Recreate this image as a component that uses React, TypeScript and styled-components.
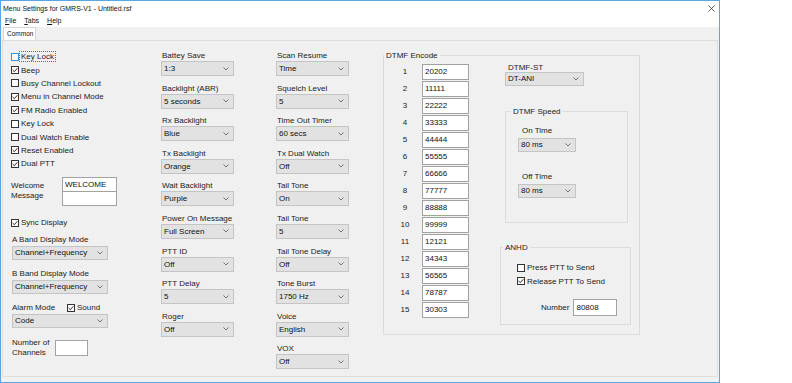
import styled, { createGlobalStyle } from "styled-components"

const GlobalStyle = createGlobalStyle`
  html, body { margin: 0; padding: 0; background: #ffffff; }
  body {
    font-family: "Liberation Sans", Arial, sans-serif;
    font-size: 8px;
    color: #1b1b1b;
  }
  * { box-sizing: border-box; }
`

type CheckProps = {
    label: string
    checked?: boolean
    focused?: boolean
}

const leftChecks: CheckProps[] = [
    { label: "Key Lock", focused: true },
    { label: "Beep", checked: true },
    { label: "Busy Channel Lockout" },
    { label: "Menu in Channel Mode", checked: true },
    { label: "FM Radio Enabled", checked: true },
    { label: "Key Lock" },
    { label: "Dual Watch Enable" },
    { label: "Reset Enabled", checked: true },
    { label: "Dual PTT", checked: true },
]

const middleFields = [
    ["Battey Save", "1:3"],
    ["Backlight (ABR)", "5 seconds"],
    ["Rx Backlight", "Blue"],
    ["Tx Backlight", "Orange"],
    ["Wait Backlight", "Purple"],
    ["Power On Message", "Full Screen"],
    ["PTT ID", "Off"],
    ["PTT Delay", "5"],
    ["Roger", "Off"],
]

const rightFields = [
    ["Scan Resume", "Time"],
    ["Squelch Level", "5"],
    ["Time Out Timer", "60 secs"],
    ["Tx Dual Watch", "Off"],
    ["Tail Tone", "On"],
    ["Tail Tone", "5"],
    ["Tail Tone Delay", "Off"],
    ["Tone Burst", "1750 Hz"],
    ["Voice", "English"],
    ["VOX", "Off"],
]

const dtmfCodes = [
    "20202", "11111", "22222", "33333", "44444", "55555", "66666", "77777",
    "88888", "99999", "12121", "34343", "56565", "78787", "30303",
]

const Check = ({ label, checked, focused }: CheckProps) => (
    <CheckRow>
        <Box $focused={focused}>
            {checked && (
                <svg width="6" height="6" viewBox="0 0 6 6">
                    <polyline points="0.6,3 2.3,4.7 5.4,1.2" fill="none" stroke="#2a2a2a" strokeWidth="1" />
                </svg>
            )}
        </Box>
        <CheckText $focused={focused}>{label}</CheckText>
    </CheckRow>
)

const Combo = ({ value, width, $tall }: { value: string; width: number; $tall?: boolean }) => (
    <ComboBox style={{ width }} $tall={$tall}>
        <span>{value}</span>
        <svg width="6" height="4" viewBox="0 0 6 4">
            <polyline points="0.5,0.5 3,3 5.5,0.5" fill="none" stroke="#6a6a6a" strokeWidth="0.9" />
        </svg>
    </ComboBox>
)

const App = () => {
    return (
        <>
            <GlobalStyle />
            <Window>
                <TitleBar>
                    <span>Menu Settings for GMRS-V1 - Untitled.rsf</span>
                    <svg width="7" height="7" viewBox="0 0 7 7">
                        <path d="M0.5 0.5 L6.5 6.5 M6.5 0.5 L0.5 6.5" stroke="#333" strokeWidth="0.8" />
                    </svg>
                </TitleBar>
                <MenuBar>
                    <MenuItem><u>F</u>ile</MenuItem>
                    <MenuItem><u>T</u>abs</MenuItem>
                    <MenuItem><u>H</u>elp</MenuItem>
                </MenuBar>
                <TabStrip>
                    <Tab>Common</Tab>
                </TabStrip>
                <TabPage>
                    <LeftColumn>
                        {leftChecks.map((c, i) => (
                            <Check key={i} {...c} />
                        ))}
                        <WelcomeRow>
                            <WelcomeLabel>Welcome<br />Message</WelcomeLabel>
                            <div>
                                <TextBox style={{ width: 55, height: 15 }} defaultValue="WELCOME" readOnly />
                                <TextBox style={{ width: 55, height: 15, marginTop: -1 }} readOnly />
                            </div>
                        </WelcomeRow>
                        <SyncRow>
                            <Check label="Sync Display" checked />
                        </SyncRow>
                        <SideLabel $top={4.8}>A Band Display Mode</SideLabel>
                        <SideCombo><Combo value="Channel+Frequency" width={96} /></SideCombo>
                        <SideLabel $top={8.5}>B Band Display Mode</SideLabel>
                        <SideCombo><Combo value="Channel+Frequency" width={96} /></SideCombo>
                        <AlarmRow>
                            <AlarmLabel>Alarm Mode</AlarmLabel>
                            <Check label="Sound" checked />
                        </AlarmRow>
                        <SideCombo><Combo value="Code" width={96} /></SideCombo>
                        <ChannelsRow>
                            <ChannelsLabel>Number of<br />Channels</ChannelsLabel>
                            <TextBox style={{ width: 33, height: 16 }} readOnly />
                        </ChannelsRow>
                    </LeftColumn>

                    <ComboColumn $left={43}>
                        {middleFields.map(([label, value], i) => (
                            <FieldBlock key={i}>
                                <FieldLabel>{label}</FieldLabel>
                                <Combo value={value} width={73} $tall />
                            </FieldBlock>
                        ))}
                    </ComboColumn>

                    <ComboColumn $left={42}>
                        {rightFields.map(([label, value], i) => (
                            <FieldBlock key={i}>
                                <FieldLabel>{label}</FieldLabel>
                                <Combo value={value} width={73} $tall />
                            </FieldBlock>
                        ))}
                    </ComboColumn>

                    <EncodeGroup>
                        <Legend $left={0}>DTMF Encode</Legend>
                        <EncodeBody>
                            <CodeList>
                                {dtmfCodes.map((code, i) => (
                                    <CodeRow key={i}>
                                        <CodeIndex>{i + 1}</CodeIndex>
                                        <TextBox style={{ width: 47, height: 16 }} defaultValue={code} readOnly />
                                    </CodeRow>
                                ))}
                            </CodeList>
                            <SidePanel>
                                <StLabel>DTMF-ST</StLabel>
                                <StCombo><Combo value="DT-ANI" width={79} /></StCombo>
                                <SpeedGroup>
                                    <Legend $left={5}>DTMF Speed</Legend>
                                    <GroupBody>
                                        <SpeedLabel $top={8.5}>On Time</SpeedLabel>
                                        <SpeedCombo><Combo value="80 ms" width={58} /></SpeedCombo>
                                        <SpeedLabel $top={20}>Off Time</SpeedLabel>
                                        <SpeedCombo><Combo value="80 ms" width={58} /></SpeedCombo>
                                    </GroupBody>
                                </SpeedGroup>
                                <AnhdGroup>
                                    <Legend $left={2}>ANHD</Legend>
                                    <AnhdBody>
                                        <Check label="Press PTT to Send" />
                                        <Check label="Release PTT To Send" checked />
                                        <NumberRow>
                                            <span>Number</span>
                                            <TextBox style={{ width: 44, height: 17 }} defaultValue="80808" readOnly />
                                        </NumberRow>
                                    </AnhdBody>
                                </AnhdGroup>
                            </SidePanel>
                        </EncodeBody>
                    </EncodeGroup>
                </TabPage>
            </Window>
        </>
    )
}

export default App

const Window = styled.div`
    width: 720px;
    height: 383px;
    border: 1px solid #5aa5e4;
    background: #f0f0f0;
    display: flex;
    flex-direction: column;
`

const TitleBar = styled.div`
    height: 13px;
    background: #ffffff;
    display: flex;
    align-items: center;
    justify-content: space-between;
    padding: 1px 4px 0 2px;
    font-size: 7px;
    color: #111;
`

const MenuBar = styled.div`
    height: 13px;
    background: #ffffff;
    display: flex;
    align-items: center;
    gap: 8px;
    padding-left: 4px;
    font-size: 7px;
    color: #111;
`

const MenuItem = styled.span`
    line-height: 13px;
`

const TabStrip = styled.div`
    height: 13px;
    display: flex;
    align-items: flex-end;
    padding-left: 2px;
`

const Tab = styled.div`
    height: 13px;
    width: 33px;
    background: #ffffff;
    border: 1px solid #d6d6d6;
    border-bottom: none;
    font-size: 6.5px;
    line-height: 11px;
    padding-left: 3px;
    color: #111;
`

const TabPage = styled.div`
    flex: 1;
    margin: 0 1px 5px 1px;
    border: 1px solid #dedede;
    display: flex;
    align-items: flex-start;
    padding: 9px 0 0 8px;
`

const LeftColumn = styled.div`
    width: 107px;
    display: flex;
    flex-direction: column;
`

const CheckRow = styled.div`
    display: flex;
    align-items: center;
    height: 13.4px;
`

const Box = styled.div<{ $focused?: boolean }>`
    width: 8px;
    height: 8px;
    border: 1px solid ${p => (p.$focused ? "#3d8ee0" : "#333333")};
    background: #ffffff;
    display: flex;
    align-items: center;
    justify-content: center;
`

const CheckText = styled.span<{ $focused?: boolean }>`
    margin-left: ${p => (p.$focused ? 1 : 2)}px;
    padding: 0 ${p => (p.$focused ? 1 : 0)}px;
    line-height: 9px;
    outline: ${p => (p.$focused ? "1px dotted #666" : "none")};
`

const WelcomeRow = styled.div`
    display: flex;
    margin-top: 6.4px;
`

const WelcomeLabel = styled.div`
    width: 51px;
    padding-top: 4px;
    line-height: 10px;
`

const TextBox = styled.input`
    display: block;
    margin: 0;
    padding: 0 0 0 2px;
    border: 1px solid #a2a2a2;
    background: #ffffff;
    font: inherit;
    font-size: 8px;
    color: #111;
    outline: none;
`

const SyncRow = styled.div`
    margin-top: 10.3px;
`

const SideLabel = styled.div<{ $top: number }>`
    margin: ${p => p.$top}px 0 0 1px;
    line-height: 11px;
`

const SideCombo = styled.div`
    margin: 0.5px 0 0 1px;
`

const AlarmRow = styled.div`
    display: flex;
    align-items: center;
    margin-top: 8.5px;
    height: 11px;
`

const AlarmLabel = styled.span`
    width: 55px;
    margin-left: 1px;
`

const ChannelsRow = styled.div`
    display: flex;
    align-items: center;
    margin-top: 10px;
`

const ChannelsLabel = styled.div`
    width: 43px;
    margin-left: 1px;
    line-height: 10px;
`

const ComboColumn = styled.div<{ $left: number }>`
    width: 73px;
    margin-left: ${p => p.$left}px;
    display: flex;
    flex-direction: column;
`

const FieldBlock = styled.div`
    display: flex;
    flex-direction: column;
    margin-bottom: 6.6px;
`

const FieldLabel = styled.div`
    line-height: 11px;
    margin-left: 1px;
`

const ComboBox = styled.div<{ $tall?: boolean }>`
    height: ${p => (p.$tall ? 15 : 14)}px;
    background: #e2e2e2;
    border: 1px solid #c4c4c4;
    display: flex;
    align-items: center;
    justify-content: space-between;
    padding: 0 4px 0 2px;
    color: #111;
`

const EncodeGroup = styled.fieldset`
    margin: 0 0 0 34px;
    padding: 0;
    width: 257px;
    height: 284.5px;
    border: 1px solid #dcdcdc;
    min-width: 0;
`

const Legend = styled.legend<{ $left: number }>`
    margin-left: ${p => p.$left}px;
    padding: 0 2px;
    line-height: 11px;
    font-size: 8px;
`

const EncodeBody = styled.div`
    display: flex;
    align-items: flex-start;
`

const CodeList = styled.div`
    display: flex;
    flex-direction: column;
    margin: 2.5px 0 0 11px;
`

const CodeRow = styled.div`
    display: flex;
    align-items: center;
    margin-bottom: 1px;
`

const CodeIndex = styled.span`
    width: 20px;
    margin-right: 7px;
    text-align: center;
`

const SidePanel = styled.div`
    width: 131px;
    margin-left: 31px;
    display: flex;
    flex-direction: column;
`

const StLabel = styled.div`
    margin: 1.5px 0 0 8px;
    line-height: 10px;
`

const StCombo = styled.div`
    margin: -1px 0 0 5px;
`

const SpeedGroup = styled.fieldset`
    margin: 20.5px 0 0 5px;
    padding: 0;
    width: 123px;
    height: 116.5px;
    border: 1px solid #dcdcdc;
    min-width: 0;
`

const GroupBody = styled.div`
    display: flex;
    flex-direction: column;
`

const SpeedLabel = styled.div<{ $top: number }>`
    margin: ${p => p.$top}px 0 0 16px;
    line-height: 10px;
`

const SpeedCombo = styled.div`
    margin: 2px 0 0 12px;
`

const AnhdGroup = styled.fieldset`
    margin: 19.5px 0 0 0;
    padding: 0;
    width: 131px;
    height: 82.5px;
    border: 1px solid #dcdcdc;
    min-width: 0;
`

const AnhdBody = styled.div`
    display: flex;
    flex-direction: column;
    padding: 8px 0 0 16px;
`

const NumberRow = styled.div`
    display: flex;
    align-items: center;
    gap: 4px;
    margin: 11.7px 0 0 24px;
`
